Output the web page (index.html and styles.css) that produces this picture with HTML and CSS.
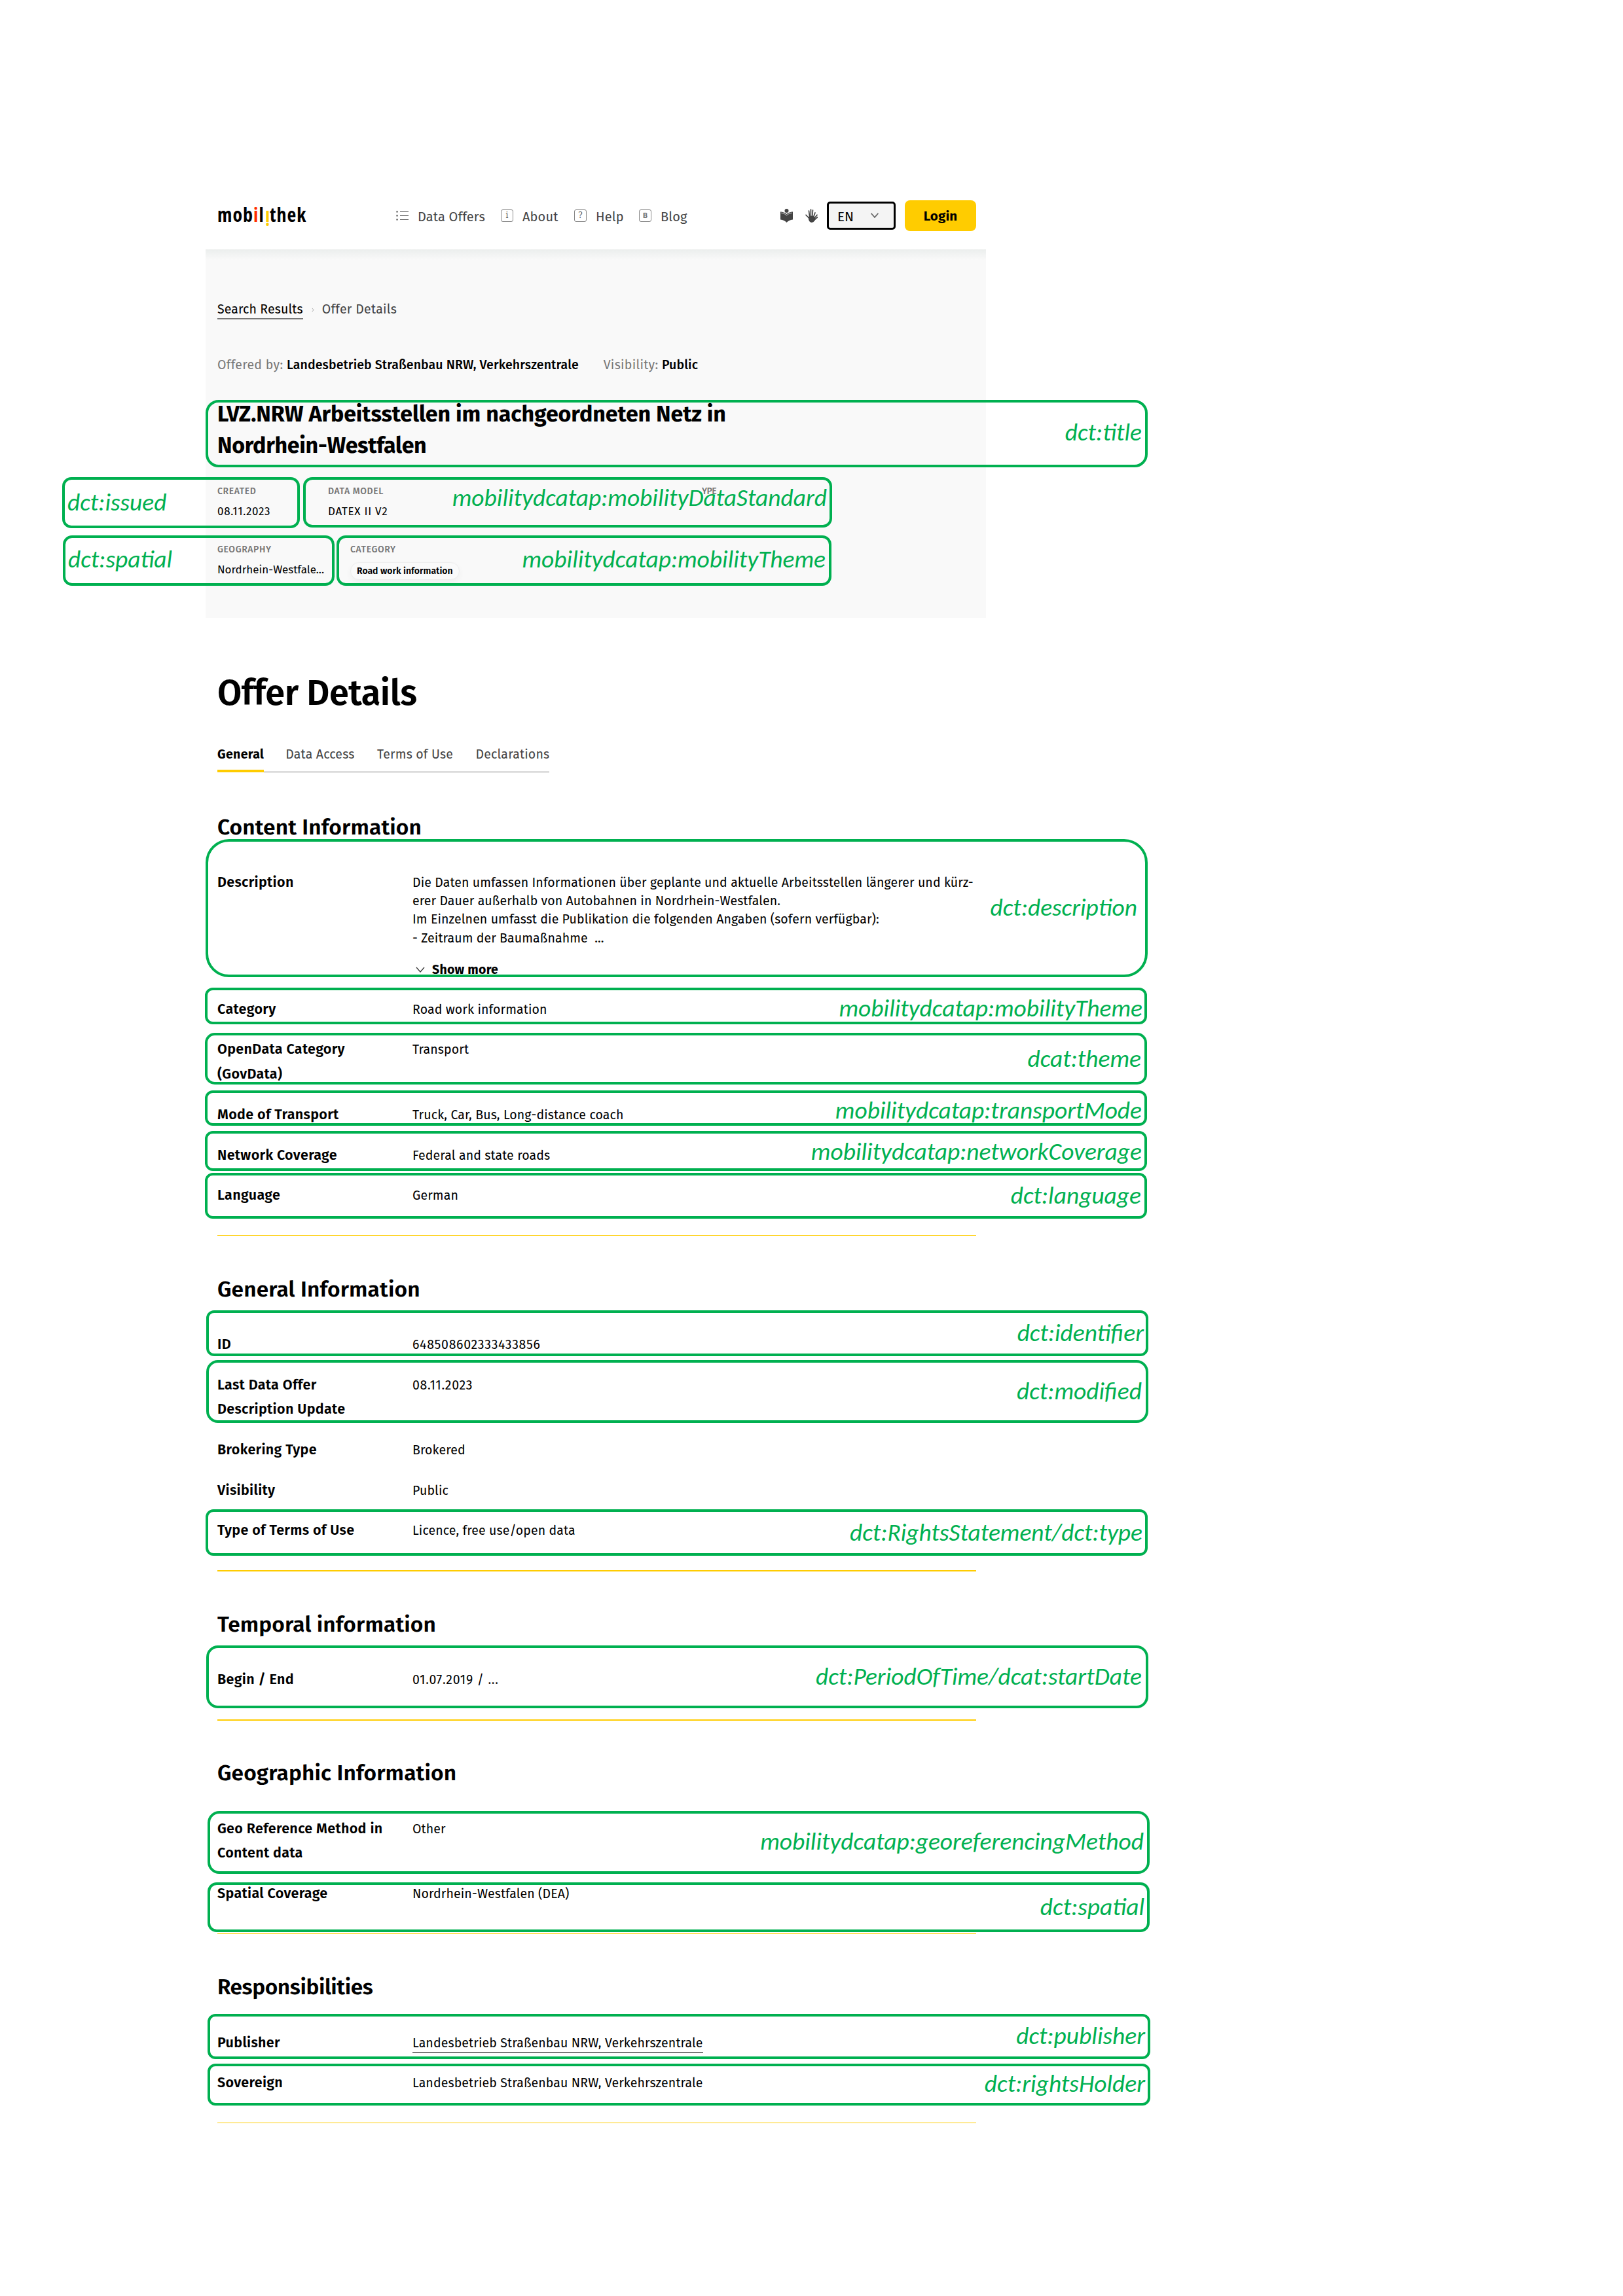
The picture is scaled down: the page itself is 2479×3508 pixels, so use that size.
FILE: index.html
```html
<!DOCTYPE html>
<html lang="en">
<head>
<meta charset="utf-8">
<title>Mobilithek – Offer Details</title>
<link rel="stylesheet" href="styles.css">
</head>
<body>
<div class="page">
  <header class="header">
    <a class="logo">mob<span class="logo-red">i</span>l<span class="logo-yellow">i</span>thek</a>
    <nav class="nav">
      <a class="nav-item nav-offers">
        <svg class="icon" viewBox="0 0 19 19" fill="none" stroke="#666" stroke-width="1.2"><path d="M6 3.5h13M6 9.5h13M6 15.5h13"/><path d="M.5 3.5h2M.5 9.5h2M.5 15.5h2" stroke="#333" stroke-width="2"/></svg>
        <span>Data Offers</span></a>
      <a class="nav-item nav-about"><span class="icon glyph-box">i</span><span>About</span></a>
      <a class="nav-item nav-help"><span class="icon glyph-box">?</span><span>Help</span></a>
      <a class="nav-item nav-blog"><span class="icon glyph-box glyph-bold">B</span><span>Blog</span></a>
    </nav>
    <div class="tools">
      <svg class="tool-icon" viewBox="0 0 19 21" fill="#444"><circle cx="9.5" cy="3" r="3"/><path d="M0 4.5Q5.500 4.500 9.500 8Q13.500 4.500 19 4.500V16.500Q13 17 9.500 21Q6 17 0 16.500Z"/><path d="M1 6.200Q6 6.500 9.500 10Q13 6.500 18 6.200" fill="none" stroke="#fff" stroke-width=".7"/></svg>
      <svg class="tool-icon" viewBox="0 0 19 21" fill="none" stroke="#444" stroke-linecap="round"><path d="M7 15 5.500 3M8.500 13V1M10.500 13 11.500 2M6 14.500 1 9.500M12 14 15 6M13 15.500 18 9.500M13.500 17 18.500 13" stroke-width="1.700"/><path d="M5.500 12.500Q9 10 13 12L15 16.500Q13 21 9 20.500Q6 20 5.500 16Z" fill="#444" stroke-width="1"/></svg>
      <div class="lang"><span>EN</span><svg class="chevron" viewBox="0 0 12 8" fill="none" stroke="#666" stroke-width="1.800"><path d="M.7 1 6 7l5.300-6"/></svg></div>
      <a class="login">Login</a>
    </div>
  </header>

  <section class="hero">
    <div class="crumbs"><a class="crumb-link">Search Results</a><svg class="crumb-sep" viewBox="0 0 4 7" fill="none" stroke="#aaa"><path d="M.8.8 3 3.500.8 6.200"/></svg><span class="crumb-current">Offer Details</span></div>
    <div class="offered"><span class="muted">Offered by:</span> <span class="strong">Landesbetrieb Straßenbau NRW, Verkehrszentrale</span><span class="muted vis">Visibility:</span> <span class="strong">Public</span></div>
    <h2 class="title">LVZ.NRW Arbeitsstellen im nachgeordneten Netz in<br><span class="title-end">Nordrhein-Westfalen</span></h2>
    <div class="meta meta-first">
      <div class="fact fact-created"><span class="cap">CREATED</span><span class="val num">08.11.2023</span></div>
      <div class="fact fact-model"><span class="cap">DATA MODEL</span><span class="val num">DATEX II V2</span></div>
      <div class="fact"><span class="cap cap-plain">YPE</span></div>
    </div>
    <div class="meta">
      <div class="fact fact-geo"><span class="cap">GEOGRAPHY</span><span class="val">Nordrhein-Westfale...</span></div>
      <div class="fact"><span class="cap">CATEGORY</span><span class="chip">Road work information</span></div>
    </div>
  </section>

  <main class="details">
    <h1 class="heading">Offer Details</h1>
    <div class="tabs"><a class="tab active">General</a><a class="tab">Data Access</a><a class="tab">Terms of Use</a><a class="tab">Declarations</a></div>

    <section class="group group-first">
      <h3>Content Information</h3>
      <dl>
        <div class="row row-description"><dt>Description</dt><dd class="prose">Die Daten umfassen Informationen über geplante und aktuelle Arbeitsstellen längerer und kürz-<br>erer Dauer außerhalb von Autobahnen in Nordrhein-Westfalen.<br>Im Einzelnen umfasst die Publikation die folgenden Angaben (sofern verfügbar):<br>- Zeitraum der Baumaßnahme&nbsp; ...
          <div class="more"><svg class="more-icon" viewBox="0 0 14 10" fill="none" stroke="#333" stroke-width="1.200"><path d="M1 1l6 7 6-7"/></svg>Show more</div></dd></div>
        <div class="row"><dt>Category</dt><dd>Road work information</dd></div>
        <div class="row"><dt>OpenData Category<br>(GovData)</dt><dd>Transport</dd></div>
        <div class="row"><dt>Mode of Transport</dt><dd>Truck, Car, Bus, Long-distance coach</dd></div>
        <div class="row"><dt>Network Coverage</dt><dd>Federal and state roads</dd></div>
        <div class="row"><dt>Language</dt><dd>German</dd></div>
      </dl>
    </section>

    <section class="group">
      <h3>General Information</h3>
      <dl>
        <div class="row"><dt>ID</dt><dd class="num">648508602333433856</dd></div>
        <div class="row"><dt>Last Data Offer<br>Description Update</dt><dd class="num">08.11.2023</dd></div>
        <div class="row"><dt>Brokering Type</dt><dd>Brokered</dd></div>
        <div class="row"><dt>Visibility</dt><dd>Public</dd></div>
        <div class="row"><dt>Type of Terms of Use</dt><dd>Licence, free use/open data</dd></div>
      </dl>
    </section>

    <section class="group thick">
      <h3>Temporal information</h3>
      <dl><div class="row"><dt>Begin / End</dt><dd class="num">01.07.2019 / ...</dd></div></dl>
    </section>

    <section class="group thick">
      <h3>Geographic Information</h3>
      <dl>
        <div class="row"><dt>Geo Reference Method in<br>Content data</dt><dd>Other</dd></div>
        <div class="row"><dt>Spatial Coverage</dt><dd>Nordrhein-Westfalen (DEA)</dd></div>
      </dl>
    </section>

    <section class="group group-last">
      <h3 class="tight">Responsibilities</h3>
      <dl>
        <div class="row"><dt>Publisher</dt><dd><a class="link">Landesbetrieb Straßenbau NRW, Verkehrszentrale</a></dd></div>
        <div class="row"><dt>Sovereign</dt><dd>Landesbetrieb Straßenbau NRW, Verkehrszentrale</dd></div>
      </dl>
    </section>
  </main>
</div>

<div class="note n-title">dct:title</div>
<div class="note n-issued">dct:issued</div>
<div class="note n-standard">mobilitydcatap:mobilityDataStandard</div>
<div class="note n-spatial">dct:spatial</div>
<div class="note n-theme">mobilitydcatap:mobilityTheme</div>
<div class="note n-description">dct:description</div>
<div class="note n-category">mobilitydcatap:mobilityTheme</div>
<div class="note n-opendata">dcat:theme</div>
<div class="note n-mode">mobilitydcatap:transportMode</div>
<div class="note n-network">mobilitydcatap:networkCoverage</div>
<div class="note n-language">dct:language</div>
<div class="note n-id">dct:identifier</div>
<div class="note n-modified">dct:modified</div>
<div class="note n-terms">dct:RightsStatement/dct:type</div>
<div class="note n-period">dct:PeriodOfTime/dcat:startDate</div>
<div class="note n-georef">mobilitydcatap:georeferencingMethod</div>
<div class="note n-coverage">dct:spatial</div>
<div class="note n-publisher">dct:publisher</div>
<div class="note n-holder">dct:rightsHolder</div>
</body>
</html>
```
FILE: styles.css
```css
* { box-sizing: border-box; }

body {
  margin: 0;
  position: relative;
  width: 2479px;
  height: 3508px;
  overflow: hidden;
  background: #fff;
  color: #000;
  font: 19.500px/24px "Fira Sans", "Noto Sans", sans-serif;
  letter-spacing: .12px;
}

.page { width: 1192px; margin-left: 314px; padding-top: 278px; }

/* Header */
.header { display: flex; align-items: center; height: 103px; padding-left: 18px; }
.logo { width: 273px; padding-bottom: 3px; font: 700 30px/36px "Open Sans", sans-serif; font-stretch: 75%; letter-spacing: 1px; }
.logo-red { color: #ff2a00; }
.logo-yellow { display: inline-block; color: #ffcc00; transform: translateY(5px) rotate(180deg); }
.nav { display: flex; width: 587px; padding-top: 2px; font-size: 20px; color: #444; }
.nav-item { display: flex; align-items: center; gap: 14px; }
.nav-offers { width: 160px; }
.nav-about { width: 112px; }
.nav-help { width: 99px; }
.icon { width: 19px; height: 19px; margin-top: -3px; flex: none; }
.glyph-box { border: 1px solid #888; border-radius: 3px; font: 12px/17px "DejaVu Serif", serif; text-align: center; color: #555; }
.glyph-bold { font: 700 10px/17px "DejaVu Sans", sans-serif; color: #777; }
.tools { display: flex; align-items: center; }
.tool-icon { width: 19px; height: 21px; margin-right: 19px; }
.tool-icon + .tool-icon { margin-right: 14px; }
.lang { display: flex; align-items: center; width: 105px; height: 43px; padding: 2px 0 0 13px; border: 3px solid #000; border-radius: 5px; background: #f4f4f4; font-size: 20.500px; }
.chevron { width: 12px; height: 8px; margin-left: 26px; margin-top: -3px; }
.login { width: 109px; height: 47px; margin-left: 14px; padding-top: 1px; border-radius: 8px; background: #fc0; font-weight: 700; font-size: 20.500px; line-height: 47px; text-align: center; }

/* Hero */
.hero { height: 563px; padding: 77px 18px 0; background: linear-gradient(#ebeeed, #f9f9f9 16px); }
.crumbs { display: flex; align-items: center; height: 30px; color: #444; }
.crumb-link { color: #000; border-bottom: 2px solid #777; height: 29px; line-height: 28px; }
.crumb-sep { width: 4px; height: 7px; margin: 0 12px 0 13px; }
.crumb-current { letter-spacing: .3px; }
.offered { margin-top: 58px; line-height: 24px; white-space: pre; letter-spacing: .3px; }
.muted { color: #777; }
.strong { font-weight: 500; letter-spacing: .1px; }
.vis { margin-left: 38px; }
.title { margin: 39px 0 0; font-size: 34px; line-height: 47.500px; font-weight: 700; letter-spacing: -.08px; white-space: nowrap; }
.title-end { letter-spacing: -.3px; }
.tight { letter-spacing: -.45px; }
.meta { display: flex; height: 89px; }
.fact { display: flex; flex-direction: column; }
.meta-first { margin-top: 37.500px; }
.fact-created { width: 169px; }
.fact-model { width: 571px; }
.fact-geo { width: 203px; }
.cap { font-size: 14px; line-height: 18px; font-weight: 500; letter-spacing: .6px; color: #757575; align-self: flex-start; }
.cap-plain { letter-spacing: -.5px; }
.val { font-size: 17px; line-height: 20px; margin-top: 12px; align-self: flex-start; letter-spacing: 0; }
.num { letter-spacing: .7px; }
.chip { margin-top: 10px; height: 27px; padding: 0 9px; border: 1px solid #eee; border-radius: 14px; box-shadow: 0 4px 10px rgba(0,0,0,.04); font-size: 14px; line-height: 26px; font-weight: 600; letter-spacing: 0; background: #fafafa; }

/* Details */
.details { padding: 79px 15px 0 18px; }
.heading { margin: 0; font-size: 54px; line-height: 72px; font-weight: 600; letter-spacing: -.45px; }
.tabs { display: inline-flex; margin-top: 44px; height: 41px; border-bottom: 1px solid #777; color: #444; line-height: 28px; letter-spacing: .18px; }
.tab { margin-right: 34.500px; }
.tab:last-child { margin-right: 0; }
.active { height: 41px; border-bottom: 4px solid #fc0; color: #000; font-weight: 700; margin-right: 33px; letter-spacing: .35px; }

.group { padding-top: 61.500px; border-top: 1px solid #fc0; }
.group.thick { border-top-width: 2px; padding-top: 60.500px; }
.group-first { border-top: 0; padding-top: 63.500px; }
.group-last { border-bottom: 1px solid #fc0; }
.group h3 { margin: 0 0 46.300px; font-size: 33.500px; line-height: 40px; font-weight: 600; }
.group dl { display: flex; flex-direction: column; gap: 23.900px; margin: 0 0 41px; }
.row { display: grid; grid-template-columns: 298px 1fr; align-items: baseline; }
.row-description { height: 170px; }
.row dt { font-size: 21.500px; line-height: 37.800px; font-weight: 600; letter-spacing: .33px; }
.row dd { margin: 0; white-space: nowrap; }
.prose { line-height: 28.300px; letter-spacing: .1px; }
.more { display: flex; align-items: center; margin: 20px 0 0 5px; font-weight: 700; letter-spacing: .25px; }
.more-icon { width: 14px; height: 10px; margin-right: 11px; }
.link { border-bottom: 2px solid #777; padding-bottom: 2px; }

/* Mapping annotations drawn over the page */
.note {
  position: absolute;
  display: flex;
  justify-content: flex-end;
  border: 4px solid #00b050;
  border-radius: 12px;
  color: #00b050;
  font: italic 37.450px/40px Carlito, Lato, sans-serif;
  letter-spacing: 0;
  white-space: nowrap;
  padding-right: 5px;
}
.n-title { left: 314px; top: 611px; width: 1439px; height: 103px; border-radius: 20px; padding-top: 25px; }
.n-issued { left: 95px; top: 729px; width: 363px; height: 78px; border-radius: 14px; padding: 14px 0 0 4px; justify-content: flex-start; }
.n-standard { left: 463px; top: 729px; width: 808px; height: 77px; border-radius: 14px; padding-top: 7px; padding-right: 4px; }
.n-spatial { left: 96px; top: 818px; width: 415px; height: 77px; border-radius: 14px; padding: 12px 0 0 4px; justify-content: flex-start; }
.n-theme { left: 514px; top: 818px; width: 756px; height: 77px; border-radius: 14px; padding-top: 12px; }
.n-description { left: 314px; top: 1282px; width: 1439px; height: 211px; border-radius: 36px; padding-top: 80px; padding-right: 12px; }
.n-category { left: 313px; top: 1509px; width: 1439px; height: 56px; padding-top: 7px; padding-right: 3px; }
.n-opendata { left: 313px; top: 1578px; width: 1439px; height: 79px; border-radius: 15px; padding-top: 15px; }
.n-mode { left: 313px; top: 1666px; width: 1439px; height: 54px; padding-top: 6px; padding-right: 4px; }
.n-network { left: 313px; top: 1728px; width: 1439px; height: 61px; padding-top: 7px; padding-right: 4px; }
.n-language { left: 313px; top: 1792px; width: 1439px; height: 70px; padding-top: 10px; }
.n-id { left: 315px; top: 2002px; width: 1439px; height: 70px; padding-top: 10px; padding-right: 3px; }
.n-modified { left: 315px; top: 2078px; width: 1439px; height: 96px; border-radius: 18px; padding-top: 23px; padding-right: 6px; }
.n-terms { left: 314px; top: 2306px; width: 1439px; height: 71px; padding-top: 11px; padding-right: 4px; }
.n-period { left: 315px; top: 2514px; width: 1439px; height: 96px; border-radius: 18px; padding-top: 23px; padding-right: 6px; }
.n-georef { left: 317px; top: 2767px; width: 1439px; height: 96px; border-radius: 18px; padding-top: 22px; }
.n-coverage { left: 317px; top: 2876px; width: 1439px; height: 76px; border-radius: 14px; padding-top: 13px; padding-right: 4px; }
.n-publisher { left: 317px; top: 3077px; width: 1440px; height: 69px; padding-top: 9px; padding-right: 4px; }
.n-holder { left: 317px; top: 3153px; width: 1440px; height: 64px; padding-top: 6px; padding-right: 4px; }
```
